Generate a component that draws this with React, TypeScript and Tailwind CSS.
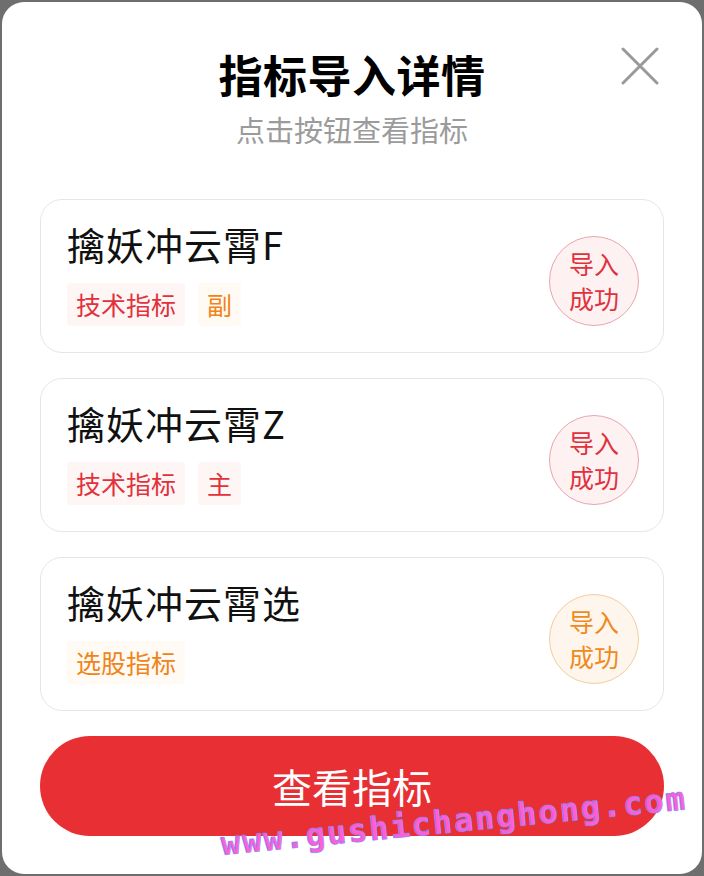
import React from "react";

type Tag = { text: string; tone: "red" | "orange" };
type Item = { name: string; tags: Tag[]; tone: "red" | "orange" };

const items: Item[] = [
  { name: "擒妖冲云霄F", tags: [{ text: "技术指标", tone: "red" }, { text: "副", tone: "orange" }], tone: "red" },
  { name: "擒妖冲云霄Z", tags: [{ text: "技术指标", tone: "red" }, { text: "主", tone: "red" }], tone: "red" },
  { name: "擒妖冲云霄选", tags: [{ text: "选股指标", tone: "orange" }], tone: "orange" },
];

const font = "font-['Noto_Sans_CJK_SC','Noto_Sans',sans-serif]";

function TagChip({ tag }: { tag: Tag }) {
  return (
    <span
      className={
        "h-[43px] px-[9px] flex items-center text-[25px] leading-none rounded-[4px] " +
        (tag.tone === "red" ? "bg-[#fef5f5] text-[#e2313a]" : "bg-[#fffaf3] text-[#ef8418]")
      }
    >
      {tag.text}
    </span>
  );
}

function Badge({ tone }: { tone: "red" | "orange" }) {
  return (
    <div
      className={
        "w-[90px] h-[90px] rounded-full border flex flex-col items-center justify-center text-[25px] leading-[35px] mt-[15px] mr-[-2px] " +
        (tone === "red"
          ? "border-[#e9a5ad] bg-[#fdf1f2] text-[#e0323c]"
          : "border-[#f3cc9f] bg-[#fef6ec] text-[#ef8a1c]")
      }
    >
      <span>导入</span>
      <span>成功</span>
    </div>
  );
}

export default function App() {
  return (
    <div className={"w-[704px] h-[876px] bg-[#6e6e6e] p-[2px] " + font}>
      <div className="relative w-full h-full bg-white rounded-[22px] overflow-hidden flex flex-col items-center pt-[46px] px-[38px]">
        <button className="absolute right-[42px] top-[44px] w-[40px] h-[40px] flex items-center justify-center">
          <svg width="38" height="38" viewBox="0 0 38 38">
            <path d="M2 2 L36 36 M36 2 L2 36" stroke="#9a9a9a" strokeWidth="3" strokeLinecap="round" />
          </svg>
        </button>
        <h1 className="text-[44px] leading-[52px] font-bold text-black tracking-[0.5px]">指标导入详情</h1>
        <p className="mt-[11px] text-[29px] leading-[36px] text-[#9b9b9b]">点击按钮查看指标</p>

        <div className="mt-[52px] w-full flex flex-col gap-[25px]">
          {items.map((it) => (
            <div
              key={it.name}
              className="h-[154px] w-full rounded-[22px] border border-[#e6e6e6] flex items-start justify-between pl-[26px] pr-[26px] pt-[21px]"
            >
              <div className="flex flex-col">
                <div className="text-[38px] leading-[46px] text-[#111] tracking-[1px]">{it.name}</div>
                <div className="mt-[16px] flex gap-[13px]">
                  {it.tags.map((t) => (
                    <TagChip key={t.text} tag={t} />
                  ))}
                </div>
              </div>
              <Badge tone={it.tone} />
            </div>
          ))}
        </div>

        <button className="mt-[25px] w-full h-[100px] rounded-full bg-[#e83034] text-white text-[40px] leading-none flex items-center justify-center">
          查看指标
        </button>

        <div className="absolute left-[219px] top-[826px] origin-left -rotate-[5.6deg] font-['DejaVu_Sans_Mono',monospace] font-bold text-[32px] leading-none tracking-[2px] text-[#ff5ed2] [-webkit-text-stroke:0.6px_#7f86ff] [text-shadow:0_0_1px_#9aa0ff] pointer-events-none whitespace-nowrap">
          www.gushichanghong.com
        </div>
      </div>
    </div>
  );
}
